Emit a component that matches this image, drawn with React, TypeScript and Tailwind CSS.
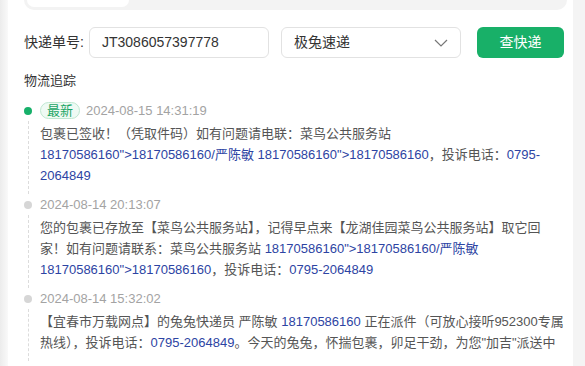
import React from "react";

const B = ({ children }: { children: React.ReactNode }) => (
  <span className="text-[#2d44a3]">{children}</span>
);

const Item = ({
  active,
  time,
  lines,
  last,
}: {
  active?: boolean;
  time: string;
  lines: React.ReactNode[];
  last?: boolean;
}) => (
  <div className="flex">
    <div className="flex w-[16px] flex-col items-start">
      <div className="flex h-[21px] items-center">
        <div
          className={
            "h-[8px] w-[8px] rounded-full " +
            (active ? "bg-[#17b06a]" : "bg-[#d6d6d6]")
          }
        />
      </div>
      {!last && (
        <div className="ml-[4px] w-0 flex-1 border-l border-dashed border-[#dcdcdc]" />
      )}
    </div>
    <div className="flex-1 pb-[8px]">
      <div className="flex h-[21px] items-center">
        {active && (
          <span className="mr-[6px] flex h-[17px] items-center rounded-full border border-[#bfe8d1] bg-[#effaf4] px-[6px] text-[13px] leading-none text-[#1aa564]">
            最新
          </span>
        )}
        <span className="text-[13px] text-[#a3a3a3]">{time}</span>
      </div>
      <div className="mt-[2px] text-[13px] leading-[21px] text-[#555]">
        {lines.map((l, i) => (
          <div key={i} className="whitespace-nowrap">
            {l}
          </div>
        ))}
      </div>
    </div>
  </div>
);

export default function App() {
  return (
    <div
      className="flex h-[366px] w-[585px] overflow-hidden bg-white"
      style={{ fontFamily: '"Liberation Sans", "Noto Sans CJK SC", sans-serif' }}
    >
      <div className="w-[8px] bg-[linear-gradient(to_right,#ececec,#f9f9f9)]" />
      <div className="flex flex-1 flex-col bg-white pl-[16px] pr-[6px]">
        <div className="h-[10px] shrink-0 rounded-b-[12px] bg-[#f3f3f3] pl-[3px]">
          <div className="h-[7px] w-[102px] rounded-b-[8px] bg-white" />
        </div>
        <div className="mt-[17px] flex h-[31px] shrink-0 items-center">
          <span className="w-[65px] text-[14px] text-[#333]">快递单号:</span>
          <div className="flex h-[31px] w-[180px] items-center rounded-[6px] border border-[#e2e2e2] px-[12px] text-[14px] text-[#333]">
            JT3086057397778
          </div>
          <div className="ml-[12px] flex h-[31px] w-[180px] items-center justify-between rounded-[6px] border border-[#e2e2e2] pl-[12px] pr-[12px] text-[14px] text-[#333]">
            <span>极兔速递</span>
            <svg width="14" height="8" viewBox="0 0 14 8" fill="none">
              <path d="M1 1l6 6 6-6" stroke="#777" strokeWidth="1.2" />
            </svg>
          </div>
          <div className="ml-[16px] flex h-[31px] w-[87px] items-center justify-center rounded-[6px] bg-[#18b068] text-[14px] text-white">
            查快递
          </div>
        </div>
        <div className="mt-[12px] shrink-0 text-[13px] leading-[21px] text-[#333]">物流追踪</div>
        <div className="mt-[9px] flex flex-col">
          <Item
            active
            time="2024-08-15 14:31:19"
            lines={[
              <>包裹已签收！（凭取件码）如有问题请电联：菜鸟公共服务站</>,
              <>
                <B>18170586160"&gt;18170586160/严陈敏 18170586160"&gt;18170586160</B>，投诉电话：<B>0795-</B>
              </>,
              <B>2064849</B>,
            ]}
          />
          <Item
            time="2024-08-14 20:13:07"
            lines={[
              <>您的包裹已存放至【菜鸟公共服务站】，记得早点来【龙湖佳园菜鸟公共服务站】取它回</>,
              <>
                家！如有问题请联系：菜鸟公共服务站 <B>18170586160"&gt;18170586160/严陈敏</B>
              </>,
              <>
                <B>18170586160"&gt;18170586160</B>，投诉电话：<B>0795-2064849</B>
              </>,
            ]}
          />
          <Item
            time="2024-08-14 15:32:02"
            lines={[
              <>
                【宜春市万载网点】的兔兔快递员 严陈敏 <B>18170586160</B> 正在派件（可放心接听952300专属
              </>,
              <>
                热线），投诉电话：<B>0795-2064849</B>。今天的兔兔，怀揣包裹，卯足干劲，为您"加吉"派送中
              </>,
            ]}
          />
          <Item
            time="2024-08-14 10:21:45"
            lines={[<>【宜春市万载网点】快件已到达</>]}
            last
          />
        </div>
      </div>
      <div className="w-[12px] bg-[#f4f4f4]" />
    </div>
  );
}
